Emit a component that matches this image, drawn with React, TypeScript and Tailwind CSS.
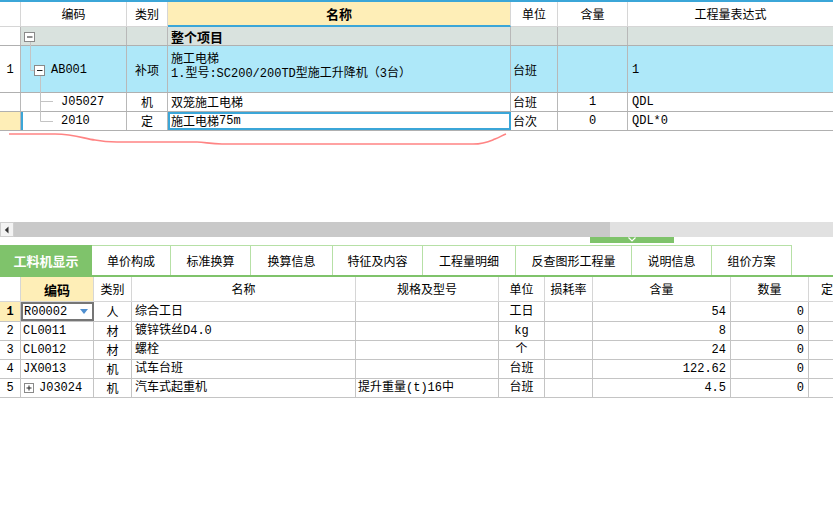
import React from "react";

const CJK = "font-['Noto_Sans_CJK_SC',sans-serif]";
const MONO = "font-['Liberation_Mono','Noto_Sans_CJK_SC',monospace]";

function TopTable() {
  const hc = "shrink-0 border-r border-b border-[#d6d6d6] flex items-center justify-center";
  const b = "shrink-0 border-r border-[#b8b8b8] flex items-center";
  const row = "flex border-b border-[#b0b0b0]";
  const gray = "bg-[#d9e2de]";
  const blue = "bg-[#aee8f9]";
  return (
    <div className="border-t-2 border-[#3ba6d8]">
      <div className={`flex h-[25px] text-[12px] ${CJK}`}>
        <div className={`w-[21px] ${hc}`} />
        <div className={`w-[106px] ${hc}`}>编码</div>
        <div className={`w-[41px] ${hc}`}>类别</div>
        <div className="w-[343px] shrink-0 border-r border-r-[#d6d6d6] border-b-2 border-b-[#3ba6d8] bg-[#feeeb7] font-bold text-[13px] flex items-center justify-center">
          名称
        </div>
        <div className={`w-[47px] ${hc}`}>单位</div>
        <div className={`w-[70px] ${hc}`}>含量</div>
        <div className="flex-1 border-b border-[#d6d6d6] flex items-center justify-center">工程量表达式</div>
      </div>
      <div className="relative">
        {/* 整个项目 */}
        <div className={`${row} h-[19px]`}>
          <div className={`w-[21px] ${b}`} />
          <div className={`w-[106px] ${b} ${gray}`} />
          <div className={`w-[41px] ${b} ${gray}`} />
          <div className={`w-[343px] ${b} ${gray} pl-[3px] font-bold text-[13px] ${CJK}`}>整个项目</div>
          <div className={`w-[47px] ${b} ${gray}`} />
          <div className={`w-[70px] ${b} ${gray}`} />
          <div className={`flex-1 ${gray}`} />
        </div>
        {/* row 1 */}
        <div className={`${row} h-[47px]`}>
          <div className={`w-[21px] ${b} justify-center pt-[2px]`}>1</div>
          <div className={`w-[106px] ${b} ${blue} pl-[30px] pt-[2px]`}>AB001</div>
          <div className={`w-[41px] ${b} ${blue} justify-center pt-[2px] ${CJK}`}>补项</div>
          <div className={`w-[343px] shrink-0 border-r border-[#b8b8b8] ${blue} pl-[3px] pt-[4px] flex flex-col leading-[16px]`}>
            <span className={CJK}>施工电梯</span>
            <span>1.型号:SC200/200TD型施工升降机（3台）</span>
          </div>
          <div className={`w-[47px] ${b} ${blue} pl-[2px] pt-[2px] ${CJK}`}>台班</div>
          <div className={`w-[70px] ${b} ${blue}`} />
          <div className={`flex-1 flex items-center ${blue} pl-[4px] pt-[2px]`}>1</div>
        </div>
        {/* J05027 */}
        <div className={`${row} h-[19px]`}>
          <div className={`w-[21px] ${b}`} />
          <div className={`w-[106px] ${b} pl-[40px]`}>J05027</div>
          <div className={`w-[41px] ${b} justify-center ${CJK}`}>机</div>
          <div className={`w-[343px] ${b} pl-[3px] ${CJK}`}>双笼施工电梯</div>
          <div className={`w-[47px] ${b} pl-[2px] ${CJK}`}>台班</div>
          <div className={`w-[70px] ${b} justify-center`}>1</div>
          <div className="flex-1 flex items-center pl-[4px]">QDL</div>
        </div>
        {/* 2010 */}
        <div className={`${row} h-[19px]`}>
          <div className={`w-[21px] ${b} bg-[#feeeb7]`} />
          <div className={`w-[106px] ${b} border-l-2 border-l-[#3ba6d8] pl-[38px]`}>2010</div>
          <div className={`w-[41px] ${b} justify-center ${CJK}`}>定</div>
          <div className="w-[343px] shrink-0 border-2 border-[#3ba6d8] flex items-center pl-[1px]">
            <span className={CJK}>施工电梯</span>
            <span>75m</span>
          </div>
          <div className={`w-[47px] ${b} pl-[2px] ${CJK}`}>台次</div>
          <div className={`w-[70px] ${b} justify-center`}>0</div>
          <div className="flex-1 flex items-center pl-[4px]">QDL*0</div>
        </div>
        <svg className="absolute left-[21px] top-0" width="106" height="104" viewBox="0 0 106 104">
          <g stroke="#c4c4c4" strokeWidth="1" fill="none">
            <path d="M9.5 15 V43.5 H13.5" />
            <path d="M19.5 49 V94.5 H32" />
            <path d="M19.5 74.5 H32" />
          </g>
          <rect x="3.5" y="5.5" width="10" height="9" fill="#fff" stroke="#8a8a8a" />
          <path d="M6 10 H11.5" stroke="#222" strokeWidth="1" />
          <rect x="13.5" y="38.5" width="10" height="10" fill="#fff" stroke="#8a8a8a" />
          <path d="M16 43.5 H21.5" stroke="#222" strokeWidth="1" />
        </svg>
      </div>
    </div>
  );
}

function Scrollbar() {
  return (
    <div className="flex h-[15px] bg-[#e1e1e1]">
      <div className="w-[14px] shrink-0 bg-[#f3f3f3] border border-[#cfcfcf] flex items-center justify-center">
        <svg width="6" height="8" viewBox="0 0 6 8">
          <path d="M4.5 0.5 L0.8 4 L4.5 7.5 Z" fill="#333" />
        </svg>
      </div>
      <div className="w-[596px] shrink-0 bg-[#c9c9c9]" />
      <div className="flex-1" />
    </div>
  );
}

const tabs: [string, number][] = [
  ["单价构成", 79],
  ["标准换算", 80],
  ["换算信息", 82],
  ["特征及内容", 90],
  ["工程量明细", 93],
  ["反查图形工程量", 116],
  ["说明信息", 80],
  ["组价方案", 80],
];

function Tabs() {
  return (
    <div className={`flex h-[32px] border-b-2 border-[#7fc36b] ${CJK}`}>
      <div className="w-[92px] shrink-0 bg-[#7fc36b] text-white font-bold text-[13px] flex items-center justify-center">
        工料机显示
      </div>
      {tabs.map(([t, w], i) => (
        <div
          key={i}
          style={{ width: w }}
          className="shrink-0 border-t border-r border-[#b6e0a6] text-[12px] flex items-center justify-center"
        >
          {t}
        </div>
      ))}
      <div className="flex-1" />
    </div>
  );
}

type BRow = {
  n: string;
  code: string;
  cat: string;
  name: string;
  spec: string;
  unit: string;
  qty: string;
};

const brows: BRow[] = [
  { n: "1", code: "R00002", cat: "人", name: "综合工日", spec: "", unit: "工日", qty: "54" },
  { n: "2", code: "CL0011", cat: "材", name: "镀锌铁丝D4.0", spec: "", unit: "kg", qty: "8" },
  { n: "3", code: "CL0012", cat: "材", name: "螺栓", spec: "", unit: "个", qty: "24" },
  { n: "4", code: "JX0013", cat: "机", name: "试车台班", spec: "", unit: "台班", qty: "122.62" },
  { n: "5", code: "J03024", cat: "机", name: "汽车式起重机", spec: "提升重量(t)16中", unit: "台班", qty: "4.5" },
];

function BottomTable() {
  const hc = "shrink-0 border-r border-b border-[#d6d6d6] flex items-center justify-center";
  const c = "shrink-0 border-r border-[#c4c4c4] flex items-center";
  return (
    <div>
      <div className={`flex h-[25px] text-[12px] ${CJK}`}>
        <div className={`w-[21px] ${hc}`} />
        <div className={`w-[73px] ${hc} bg-[#feeeb7] font-bold text-[13px]`}>编码</div>
        <div className={`w-[38px] ${hc}`}>类别</div>
        <div className={`w-[224px] ${hc}`}>名称</div>
        <div className={`w-[143px] ${hc}`}>规格及型号</div>
        <div className={`w-[46px] ${hc}`}>单位</div>
        <div className={`w-[48px] ${hc}`}>损耗率</div>
        <div className={`w-[138px] ${hc}`}>含量</div>
        <div className={`w-[78px] ${hc}`}>数量</div>
        <div className="flex-1 border-b border-[#d6d6d6] flex items-center pl-[12px]">定</div>
      </div>
      {brows.map((r, i) => (
        <div key={i} className={`flex ${i === 0 ? "h-[20px]" : "h-[19px]"} border-b border-[#c4c4c4]`}>
          <div className={`w-[21px] ${c} justify-center ${i === 0 ? "bg-[#feeeb7] font-bold" : ""}`}>{r.n}</div>
          {i === 0 ? (
            <div className="w-[73px] shrink-0 border-2 border-[#767676] flex items-center pl-[1px] pr-[4px] justify-between">
              <span>{r.code}</span>
              <svg width="8" height="5" viewBox="0 0 8 5">
                <path d="M0 0 H8 L4 5 Z" fill="#4f8fd0" />
              </svg>
            </div>
          ) : i === 4 ? (
            <div className={`w-[73px] ${c} pl-[3px] gap-[5px]`}>
              <svg width="10" height="10" viewBox="0 0 10 10">
                <rect x="0.5" y="0.5" width="9" height="9" fill="#fff" stroke="#8a8a8a" />
                <path d="M2.5 5 H7.5 M5 2.5 V7.5" stroke="#222" />
              </svg>
              <span>{r.code}</span>
            </div>
          ) : (
            <div className={`w-[73px] ${c} pl-[2px]`}>{r.code}</div>
          )}
          <div className={`w-[38px] ${c} justify-center ${CJK}`}>{r.cat}</div>
          <div className={`w-[224px] ${c} pl-[3px]`}>{r.name}</div>
          <div className={`w-[143px] ${c} pl-[2px]`}>{r.spec}</div>
          <div className={`w-[46px] ${c} justify-center`}>{r.unit}</div>
          <div className={`w-[48px] ${c}`} />
          <div className={`w-[138px] ${c} justify-end pr-[4px]`}>{r.qty}</div>
          <div className={`w-[78px] ${c} justify-end pr-[4px]`}>0</div>
          <div className="flex-1" />
        </div>
      ))}
    </div>
  );
}

export default function App() {
  return (
    <div className={`w-[833px] h-[511px] bg-white overflow-hidden text-black text-[12px] leading-none ${MONO}`}>
      <TopTable />
      <div className="h-[91px]">
        <svg width="833" height="20" viewBox="0 0 833 20" className="block">
          <path
            d="M9 3 L55 3 C75 3 85 8 95 9 C105 11 110 11 117 11 L197 11 C205 11 210 13 222 13 L473 13 C485 13 490 10 495 8 C500 6 503 4 506 3"
            fill="none"
            stroke="#ff6f6f"
            strokeOpacity="0.85"
            strokeWidth="1.6"
          />
        </svg>
      </div>
      <Scrollbar />
      <div className="h-[8px] flex">
        <div className="ml-[590px] w-[84px] h-[6px] bg-[#7fc36b] flex justify-center">
          <svg width="10" height="6" viewBox="0 0 10 6">
            <path d="M1.5 0.5 L5 4 L8.5 0.5" fill="none" stroke="#fff" strokeWidth="1.2" />
          </svg>
        </div>
      </div>
      <Tabs />
      <BottomTable />
    </div>
  );
}
